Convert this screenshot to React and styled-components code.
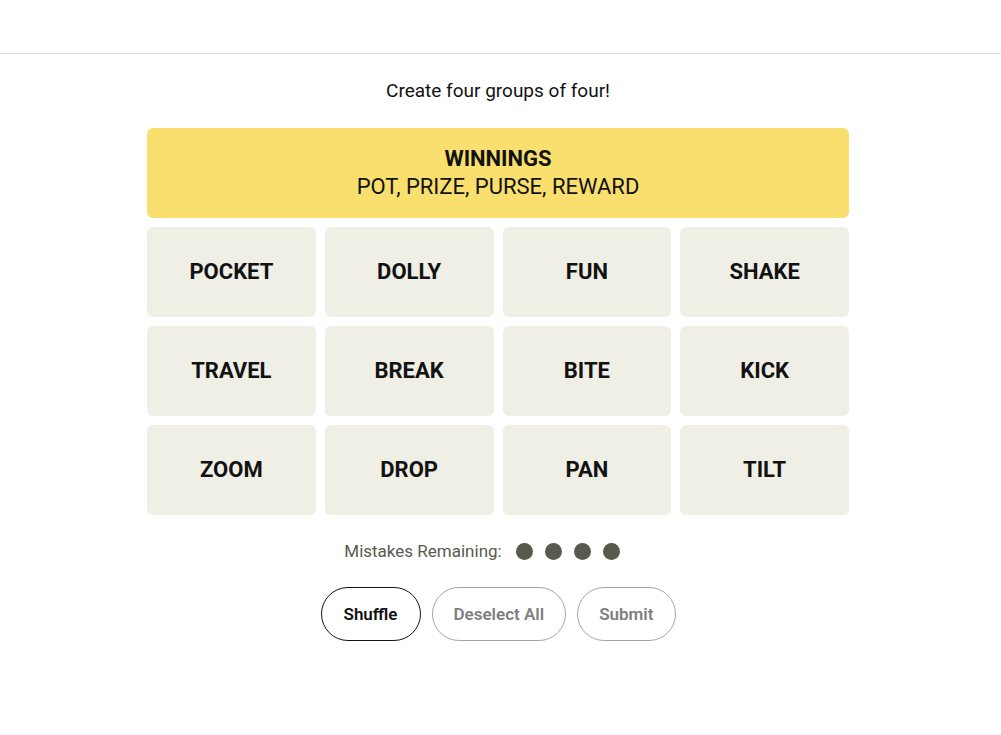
import React from "react";
import styled, { createGlobalStyle } from "styled-components";

const GlobalStyle = createGlobalStyle`
  html, body {
    margin: 0;
    padding: 0;
    background: #ffffff;
    font-family: "Roboto", "Liberation Sans", sans-serif;
    color: #121212;
  }
`;

const TopBar = styled.header`
  height: 53px;
  border-bottom: 1px solid #dcdcdc;
`;

const Main = styled.main`
  display: flex;
  flex-direction: column;
  align-items: center;
  padding-right: 5px;
`;

const Prompt = styled.p`
  margin: 24px 0 0;
  height: 26px;
  line-height: 26px;
  font-size: 19px;
  font-weight: 400;
`;

const Board = styled.div`
  margin-top: 24px;
  width: 702px;
  display: grid;
  grid-template-columns: repeat(4, 1fr);
  grid-auto-rows: 90px;
  gap: 9px;
`;

const SolvedRow = styled.div`
  grid-column: 1 / -1;
  border-radius: 6px;
  background: ${(p) => p.color};
  display: flex;
  flex-direction: column;
  align-items: center;
  justify-content: center;
  font-size: 22px;
  line-height: 28px;
  text-transform: uppercase;
`;

const GroupTitle = styled.h3`
  margin: 0;
  font-size: 22px;
  font-weight: 700;
`;

const GroupMembers = styled.div`
  font-weight: 400;
`;

const Tile = styled.button`
  border: none;
  border-radius: 6px;
  background: #efefe6;
  color: #121212;
  font-family: inherit;
  font-size: 22px;
  font-weight: 700;
  line-height: 26px;
  padding: 0 0 1px;
  text-transform: uppercase;
  cursor: pointer;
`;

const Mistakes = styled.div`
  margin-top: 26px;
  padding-right: 32px;
  display: flex;
  align-items: center;
  gap: 14px;
  font-size: 17px;
  color: #5a594e;
`;

const Dots = styled.div`
  display: flex;
  gap: 12px;
`;

const Dot = styled.span`
  width: 17px;
  height: 17px;
  border-radius: 50%;
  background: #5a594e;
`;

const Controls = styled.div`
  margin-top: 26px;
  display: flex;
  gap: 11px;
`;

const Pill = styled.button`
  height: 54px;
  padding: 0 ${(p) => (p.$active ? 22 : 21)}px;
  border-radius: 32px;
  border: 1px solid ${(p) => (p.$active ? "#121212" : "#a6a6a6")};
  background: #ffffff;
  color: ${(p) => (p.$active ? "#121212" : "#7f7f7f")};
  font-family: inherit;
  font-size: 17px;
  font-weight: 600;
  cursor: pointer;
`;

const words = [
  "pocket", "dolly", "fun", "shake",
  "travel", "break", "bite", "kick",
  "zoom", "drop", "pan", "tilt",
];

export default function App() {
  return (
    <>
      <GlobalStyle />
      <TopBar />
      <Main>
        <Prompt>Create four groups of four!</Prompt>
        <Board>
          <SolvedRow color="#f9df6d">
            <GroupTitle>Winnings</GroupTitle>
            <GroupMembers>Pot, Prize, Purse, Reward</GroupMembers>
          </SolvedRow>
          {words.map((w) => (
            <Tile key={w}>{w}</Tile>
          ))}
        </Board>
        <Mistakes>
          Mistakes Remaining:
          <Dots>
            <Dot />
            <Dot />
            <Dot />
            <Dot />
          </Dots>
        </Mistakes>
        <Controls>
          <Pill $active>Shuffle</Pill>
          <Pill>Deselect All</Pill>
          <Pill>Submit</Pill>
        </Controls>
      </Main>
    </>
  );
}
